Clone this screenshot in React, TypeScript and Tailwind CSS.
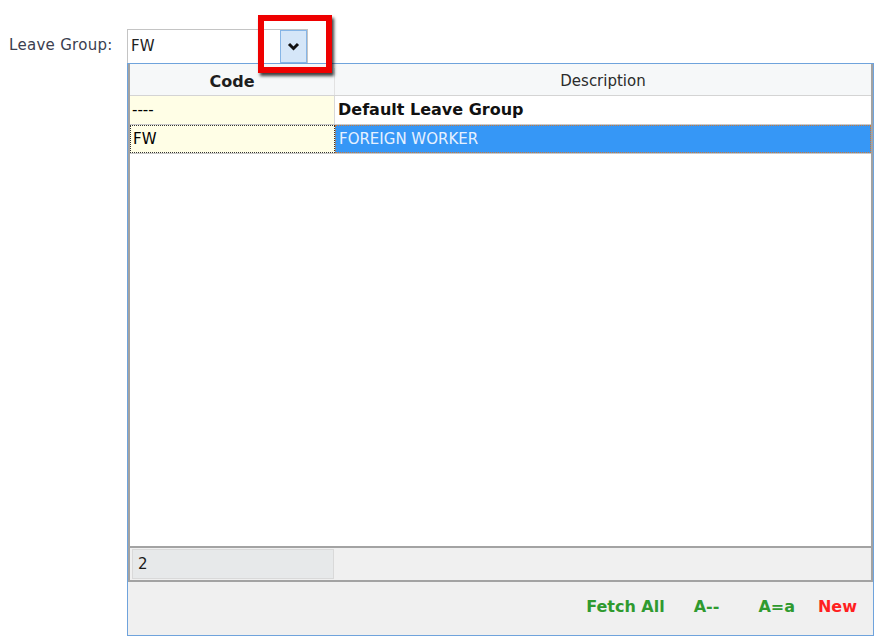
import React from "react";

const rows = [
  { code: "----", desc: "Default Leave Group", bold: true, selected: false },
  { code: "FW", desc: "FOREIGN WORKER", bold: false, selected: true },
];

function LookupPopup() {
  return (
    <div className="w-[747px] h-[573px] border border-[#6fa3dc] bg-[#f0f0f0] flex flex-col">
      {/* grid */}
      <div className="h-[518px] border-2 border-[#a3a3a3] border-t-0 bg-white flex flex-col">
        <div className="h-[32px] flex bg-[#f6f8f9] border-b border-[#d4d4d4] pt-[4px]">
          <div className="w-[205px] flex items-center justify-center font-bold text-[16px] text-[#1e1e1e] border-r border-[#e2e2e2]">
            Code
          </div>
          <div className="flex-1 flex items-center justify-center text-[#2b2b2b]">Description</div>
        </div>
        {rows.map((r) => (
          <div key={r.code} className="h-[29px] flex border-b border-[#c9c9c9]">
            <div
              className={
                "w-[205px] bg-[#fffee6] flex items-center pl-[2px] " +
                (r.selected ? "border border-dotted border-[#333]" : "border-r border-[#d8d8d8]")
              }
            >
              {r.code}
            </div>
            <div
              className={
                "flex-1 flex items-center pl-[3px] " +
                (r.selected
                  ? "bg-[#3697f6] text-[#e6f1ff] border border-dotted border-[#c8793a]"
                  : "bg-white text-[#111]") +
                (r.bold ? " font-bold text-[16px]" : "")
              }
            >
              {r.desc}
            </div>
          </div>
        ))}
        <div className="flex-1" />
        <div className="h-[34px] border-t-2 border-[#a3a3a3] bg-[#f0f0f0] flex items-center pl-[2px]">
          <div className="w-[202px] h-[30px] bg-[#e7e9ea] border border-[#d9d9d9] flex items-center pl-[5px] text-[#1a1a1a] font-medium">
            2
          </div>
        </div>
      </div>
      {/* actions */}
      <div className="flex-1 flex items-center justify-end pr-[16px] font-bold text-[16px] pb-[4px]">
        <button className="text-[#2f9a2f]">Fetch All</button>
        <button className="ml-[29px] text-[#2f9a2f]">A--</button>
        <button className="ml-[39px] text-[#2f9a2f]">A=a</button>
        <button className="ml-[23px] text-[#ff1f1f]">New</button>
      </div>
    </div>
  );
}

export default function App() {
  return (
    <div className="w-[883px] h-[636px] bg-white relative overflow-hidden font-['DejaVu_Sans',sans-serif] text-[15px]">
      <div className="flex pt-[29px]">
        <div className="w-[127px] h-[33px] pl-[9px] flex items-center text-[#3b4050] tracking-[0.3px]">Leave Group:</div>
        <div className="flex flex-col">
          <div className="w-[181px] h-[34px] border border-[#c4c4c4] border-b-0 bg-white flex items-center justify-between">
            <span className="pl-[3px] text-[#222]">FW</span>
            <span className="w-[27px] h-full bg-[#d5e6f8] border border-[#86b5e6] flex items-center justify-center">
              <svg width="13" height="9" viewBox="0 0 13 9">
                <path d="M2 2 L6.5 6.5 L11 2" fill="none" stroke="#111" strokeWidth="3" />
              </svg>
            </span>
          </div>
          <LookupPopup />
        </div>
      </div>
      {/* red highlight annotation */}
      <div className="absolute left-[258px] top-[15px] w-[74px] h-[58px] border-[6px] border-[#ee0000] shadow-[2px_3px_3px_rgba(0,0,0,0.75)]" />
    </div>
  );
}
